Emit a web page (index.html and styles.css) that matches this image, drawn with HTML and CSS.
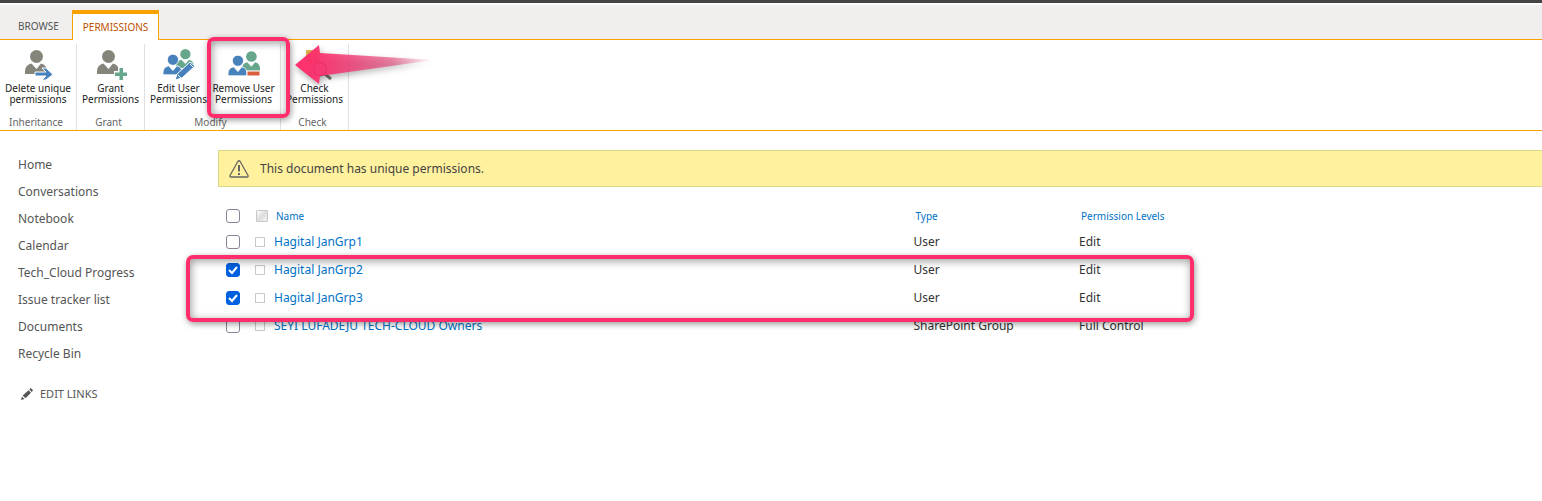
FILE: index.html
```html
<!DOCTYPE html>
<html lang="en">
<head>
<meta charset="utf-8">
<title>Permissions</title>
<link rel="stylesheet" href="styles.css">
</head>
<body>
<svg class="defs" aria-hidden="true">
  <symbol id="person" viewBox="0 0 22 24">
    <circle cx="11.500" cy="6.500" r="6.500"/>
    <path d="M0 24V21Q0 15 6.500 13.500L11.500 19L16 13.500Q22 15 22 21V24Z"/>
  </symbol>
</svg>
<div class="suite-bar"></div>
<header class="ribbon">
  <nav class="tabs">
    <a class="tab" href="#">BROWSE</a>
    <a class="tab tab-active" href="#">PERMISSIONS</a>
  </nav>
  <div class="tools">
    <section class="group">
      <div class="buttons">
        <button class="tool tool-wide">
          <svg class="icon" viewBox="0 0 32 32"><use href="#person" x="3" y="2" width="22" height="24" fill="#85857b"/><path d="M13 24H24L20 20H24L31 26.500L24 32H20L24 28H13Z" fill="#4782bd" stroke="#fff"/></svg>
          <span>Delete unique<br>permissions</span>
        </button>
      </div>
      <div class="group-name">Inheritance</div>
    </section>
    <section class="group">
      <div class="buttons">
        <button class="tool">
          <svg class="icon" viewBox="0 0 32 32"><use href="#person" x="2" y="2" width="22" height="24" fill="#85857b"/><path d="M23 19H29V23H33V28H29V32H23V28H19V23H23Z" fill="#fff"/><path d="M24.500 20H28V24.500H32V28H28V32H24.500V28H20V24.500H24.500Z" fill="#66a68b"/></svg>
          <span>Grant<br>Permissions</span>
        </button>
      </div>
      <div class="group-name">Grant</div>
    </section>
    <section class="group">
      <div class="buttons buttons-pair">
        <button class="tool">
          <svg class="icon" viewBox="0 0 32 32"><use href="#person" x="13" y="1" width="18" height="19" fill="#66a68b"/><use href="#person" x="0" y="6" width="19" height="21" fill="#4782bd" stroke="#fff"/><path d="M12 32L14 26L27 14L32 18L19 30Z" fill="#4782bd" stroke="#fff"/><path d="M15 27L18 30M27 16L30 19" stroke="#fff" fill="none"/></svg>
          <span>Edit User<br>Permissions</span>
        </button>
        <button class="tool">
          <svg class="icon" viewBox="0 0 32 32"><use href="#person" x="14" y="3" width="18" height="20" fill="#66a68b"/><use href="#person" x="0" y="7" width="19" height="21" fill="#4782bd" stroke="#fff"/><path d="M19 23H32V28H19Z" fill="#d9603d" stroke="#fff"/></svg>
          <span>Remove User<br>Permissions</span>
        </button>
      </div>
      <div class="group-name">Modify</div>
    </section>
    <section class="group">
      <div class="buttons">
        <button class="tool">
          <svg class="icon" viewBox="0 0 32 32"><path d="M7 2H20V17H7Z" fill="#dfb14c"/><circle cx="21" cy="21" r="6.500" fill="#fff" stroke="#77776f" stroke-width="2"/><path d="M26 26L32 31" stroke="#77776f" stroke-width="3"/></svg>
          <span>Check<br>Permissions</span>
        </button>
      </div>
      <div class="group-name">Check</div>
    </section>
  </div>
</header>
<div class="workspace">
  <nav class="side">
    <a href="#">Home</a>
    <a href="#">Conversations</a>
    <a href="#">Notebook</a>
    <a href="#">Calendar</a>
    <a href="#">Tech_Cloud Progress</a>
    <a href="#">Issue tracker list</a>
    <a href="#">Documents</a>
    <a href="#">Recycle Bin</a>
    <a class="edit" href="#"><svg class="pencil" viewBox="0 0 12 12"><path d="M0 12L1 8.500L3.500 11ZM1.700 7.500L7.500 2.200L10 4.700L4.500 10.300ZM8.300 1.500L9.800 0L12 2.200L10.700 3.900Z" fill="#555"/></svg>EDIT LINKS</a>
  </nav>
  <main class="main">
    <div class="notice">
      <svg class="warning" viewBox="0 0 20 18" fill="none" stroke="#666"><path d="M8.800 1.500Q10 0 11.200 1.500L19 15.500Q19.500 17 18 17H2Q0.500 17 1 15.500Z" stroke-width="1.300"/><path d="M10 5V11.500M10 13V15" stroke-width="2"/></svg>
      <span>This document has unique permissions.</span>
    </div>
    <table class="list">
      <colgroup><col class="col-check"><col class="col-mark"><col class="col-name"><col class="col-type"><col></colgroup>
      <thead>
        <tr><th><input class="check" type="checkbox" aria-label="Select all"></th><th><span class="presence presence-head"></span></th><th><a href="#">Name</a></th><th><a href="#">Type</a></th><th><a href="#">Permission Levels</a></th></tr>
      </thead>
      <tbody>
        <tr><td><input class="check" type="checkbox" aria-label="Hagital JanGrp1"></td><td><span class="presence"></span></td><td><a href="#">Hagital JanGrp1</a></td><td>User</td><td>Edit</td></tr>
        <tr><td><input class="check" type="checkbox" checked aria-label="Hagital JanGrp2"></td><td><span class="presence"></span></td><td><a href="#">Hagital JanGrp2</a></td><td>User</td><td>Edit</td></tr>
        <tr><td><input class="check" type="checkbox" checked aria-label="Hagital JanGrp3"></td><td><span class="presence"></span></td><td><a href="#">Hagital JanGrp3</a></td><td>User</td><td>Edit</td></tr>
        <tr><td><input class="check" type="checkbox" aria-label="SEYI LUFADEJU TECH-CLOUD Owners"></td><td><span class="presence"></span></td><td><a href="#">SEYI LUFADEJU TECH-CLOUD Owners</a></td><td>SharePoint Group</td><td>Full Control</td></tr>
      </tbody>
    </table>
  </main>
</div>
<div class="mark mark-button"></div>
<div class="mark mark-rows"></div>
<svg class="arrow" viewBox="0 0 146 46">
  <defs><linearGradient id="fade"><stop offset="0" stop-color="#ff2d6b"/><stop offset="0.250" stop-color="#fb3270" stop-opacity="0.900"/><stop offset="0.700" stop-color="#e33d72" stop-opacity="0.600"/><stop offset="1" stop-color="#e33d72" stop-opacity="0"/></linearGradient></defs>
  <path d="M2 23L26 3L27 11L141 18L27 34L26 42Z" fill="url(#fade)"/>
</svg>
</body>
</html>
```
FILE: styles.css
```css
* { box-sizing: border-box; }
body {
  margin: 0;
  position: relative;
  background: #fff;
  color: #333;
  font: 12px/18px "Segoe UI", "Noto Sans", "Open Sans", sans-serif;
}
a { color: inherit; text-decoration: none; }
.defs { position: absolute; width: 0; height: 0; }
.suite-bar { height: 5px; background: #444; border-bottom: 2px solid #fff; }
.ribbon { border-bottom: 1px solid #f8a200; font-size: 10px; }
.tabs {
  display: flex;
  align-items: flex-end;
  height: 35px;
  background: #f0efed;
  border-bottom: 1px solid #f8a200;
}
.tab { padding: 4px 13px 4px 18px; color: #555; }
.tab-active {
  height: 30px;
  margin-bottom: -1px;
  padding: 4px 10px;
  border: 1px solid #f8a200;
  border-top-width: 4px;
  border-bottom: 0;
  background: #fff;
  color: #c05000;
}
.tools { display: flex; padding-top: 4px; }
.group {
  display: flex;
  flex-direction: column;
  border-right: 1px solid #e1e1e1;
  padding-top: 4px;
}
.buttons { display: flex; }
.buttons-pair { padding: 0 4px 0 1px; }
.tool {
  display: flex;
  flex-direction: column;
  align-items: center;
  gap: 3px;
  width: 67px;
  margin: 0;
  padding: 0;
  border: 0;
  background: none;
  color: #222;
  font: inherit;
  line-height: 11px;
  white-space: nowrap;
}
.buttons-pair .tool { width: 65px; }
.tool-wide { width: 76px; }
.icon { width: 32px; height: 32px; overflow: visible; }
.group-name { padding: 9px 4px 0 0; text-align: center; color: #666; line-height: 16px; }
.workspace { display: flex; padding-top: 19px; }
.side {
  display: flex;
  flex-direction: column;
  flex: 0 0 218px;
  gap: 9px;
  padding: 6px 0 0 18px;
  color: #555;
}
.edit { display: flex; align-items: center; gap: 7px; padding: 13px 0 0 3px; font-size: 11px; }
.pencil { width: 12px; height: 12px; }
.main { flex: 1; min-width: 0; }
.notice {
  display: flex;
  align-items: center;
  gap: 11px;
  height: 37px;
  padding-left: 10px;
  border: 1px solid #d7d889;
  border-right: 0;
  background: #fff19d;
  color: #444;
}
.warning { width: 20px; height: 18px; }
.list { width: 100%; margin-top: 16px; table-layout: fixed; border-collapse: collapse; }
.list th, .list td { height: 29px; padding: 0; text-align: left; vertical-align: middle; }
.list td { height: 28px; }
.list th { height: 25px; font-size: 10px; font-weight: 400; }
.list th:nth-child(n+3) { padding-left: 2px; }
.list a { color: #0072c6; }
.col-check { width: 36px; }
.col-mark { width: 20px; }
.col-name { width: 48.3%; }
.col-type { width: 12.5%; }
.check {
  appearance: none;
  display: block;
  width: 14px;
  height: 14px;
  margin: 0 0 0 8px;
  border: 1px solid #85859a;
  border-radius: 3px;
  background: #fff;
}
.check:checked {
  border-color: #0060df;
  background: #0060df url("data:image/svg+xml,%3Csvg xmlns='http://www.w3.org/2000/svg' viewBox='0 0 12 12'%3E%3Cpath d='M2 6L5 9L10 3' fill='none' stroke='white' stroke-width='2'/%3E%3C/svg%3E");
}
.presence { display: block; width: 10px; height: 10px; border: 1px solid #c8c8c8; margin-left: 1px; }
.presence-head { width: 12px; height: 12px; margin-left: 2px; border-radius: 1px; background: linear-gradient(135deg, #fff, #ddd, #f5f5f5); }
.mark {
  position: absolute;
  border: 4px solid #ff2d6b;
  border-radius: 7px;
  box-shadow: 1px 2px 6px rgba(0, 0, 0, 0.4), inset 1px 2px 8px rgba(0, 0, 0, 0.4);
  pointer-events: none;
}
.mark-button { left: 207px; top: 37px; width: 83px; height: 81px; }
.mark-rows { left: 186px; top: 255px; width: 1008px; height: 67px; }
.arrow {
  position: absolute;
  left: 293px;
  top: 42px;
  width: 146px;
  height: 46px;
  overflow: visible;
  pointer-events: none;
  filter: drop-shadow(1px 3px 3px rgba(0, 0, 0, 0.35));
}
```
